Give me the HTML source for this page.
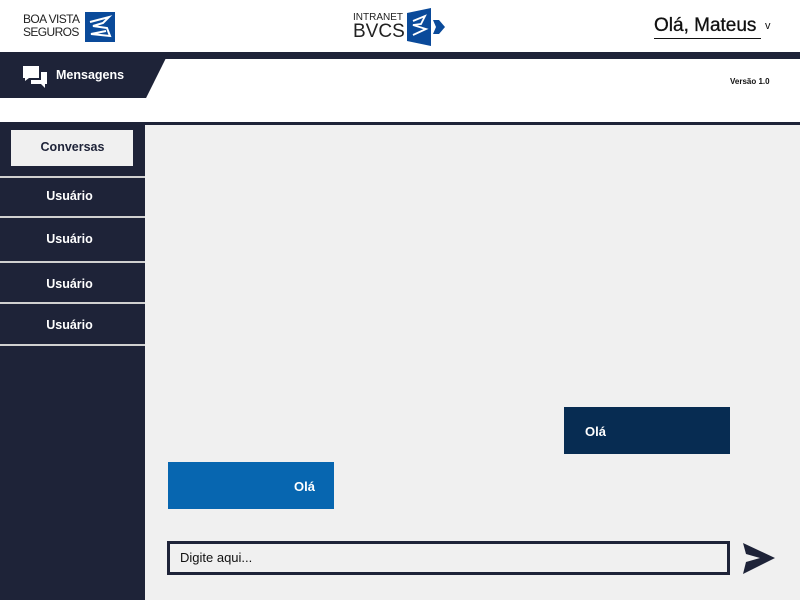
<!DOCTYPE html>
<html><head><meta charset="utf-8"><style>
*{margin:0;padding:0;box-sizing:border-box}
body{width:800px;height:600px;overflow:hidden;background:#f0f0f0;font-family:"Liberation Sans","DejaVu Sans",sans-serif;position:relative}
.abs{position:absolute}
.navy{background:#1e2338}
.side a{position:absolute;left:-3px;width:145px;color:#fff;font-weight:bold;font-size:12.5px;text-align:center}
.sep{position:absolute;left:0;width:145px;height:2px;background:#d0d0d0}
</style></head><body>
<div class="abs" style="left:0;top:0;width:800px;height:52px;background:#fff"></div>
<div class="abs" style="left:23px;top:13px;font-size:12px;line-height:13px;color:#222;letter-spacing:-0.6px">BOA VISTA<br>SEGUROS</div>
<svg class="abs" style="left:85px;top:12px" width="30" height="30" viewBox="0 0 30 30"><rect width="30" height="30" fill="#0a4a9a"/><path d="M5 10 L24 5 L18 11 L8 14 L22 16 L25 24 L6 22 L21 19" stroke="#fff" stroke-width="2" fill="none"/></svg>
<div class="abs" style="left:353px;top:12px;font-size:10px;color:#222">INTRANET</div>
<div class="abs" style="left:353px;top:21px;font-size:19px;color:#222">BVCS</div>
<svg class="abs" style="left:405px;top:8px" width="42" height="38" viewBox="0 0 42 38"><path d="M2 5 L26 0 L26 38 L2 33 Z" fill="#0a4a9a"/><path d="M8 13 L20 8 L16 16 L8 17 L21 21 L8 27" stroke="#fff" stroke-width="1.8" fill="none"/><path d="M28 12 L34 12 L40 19 L34 26 L28 26 L31 19 Z" fill="#0a4a9a"/></svg>
<div class="abs" style="left:654px;top:15px;font-size:19px;color:#111;-webkit-text-stroke:0.3px #111">Olá, Mateus</div>
<div class="abs" style="left:654px;top:38px;width:107px;height:1px;background:#111"></div>
<div class="abs" style="left:765px;top:20px;font-size:11px;color:#111">v</div>
<div class="abs navy" style="left:0;top:52px;width:800px;height:7px"></div>
<div class="abs" style="left:0;top:59px;width:800px;height:63px;background:#fff"></div>
<div class="abs navy" style="left:0;top:58px;width:166px;height:40px;clip-path:polygon(0 0,100% 0,88% 100%,0 100%)"></div>
<svg class="abs" style="left:22px;top:65px" width="26" height="24" viewBox="0 0 26 24"><path d="M1 1 H17 V13 H7 L3 16 V13 H1 Z" fill="#fff"/><path d="M19 7 H25 V19 H23 V23 L19 19 H9 V15 H19 Z" fill="#fff"/></svg>
<div class="abs" style="left:56px;top:68px;font-size:12.5px;font-weight:bold;color:#fff">Mensagens</div>
<div class="abs" style="left:730px;top:77px;font-size:8px;font-weight:bold;color:#111">Versão 1.0</div>
<div class="abs navy" style="left:0;top:122px;width:800px;height:3px"></div>
<div class="abs navy side" style="left:0;top:125px;width:145px;height:475px">
<div class="abs" style="left:11px;top:5px;width:122px;height:36px;background:#f0f0f0"></div>
<a style="top:15px;left:0;color:#1e2338">Conversas</a>
<div class="sep" style="top:51px"></div>
<a style="top:64px">Usuário</a>
<div class="sep" style="top:91px"></div>
<a style="top:107px">Usuário</a>
<div class="sep" style="top:136px"></div>
<a style="top:152px">Usuário</a>
<div class="sep" style="top:177px"></div>
<a style="top:193px">Usuário</a>
<div class="sep" style="top:219px"></div>
</div>
<div class="abs" style="left:564px;top:407px;width:166px;height:47px;background:#072c52;color:#fff;font-size:13px;font-weight:bold;padding:17px 0 0 21px">Olá</div>
<div class="abs" style="left:168px;top:462px;width:166px;height:47px;background:#0766b0;color:#fff;font-size:13px;font-weight:bold;padding:17px 0 0 126px">Olá</div>
<div class="abs" style="left:167px;top:541px;width:563px;height:34px;border:3px solid #1e2338;background:#f0f0f0;font-size:13px;color:#111;padding:6px 0 0 10px">Digite aqui...</div>
<svg class="abs" style="left:742px;top:542px" width="34" height="33" viewBox="0 0 34 33"><path d="M1 1 L33 16 L1 32 L4 20 L18 16 L4 12 Z" fill="#1e2338"/></svg>
</body></html>
